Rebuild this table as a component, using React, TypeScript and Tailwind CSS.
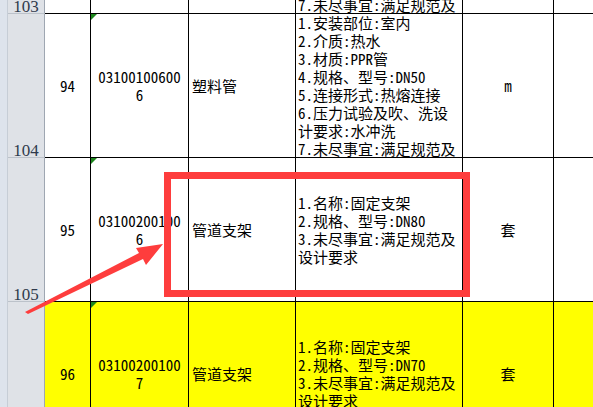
import React from "react";

type Row = {
  num: string;
  seq: string;
  code: [string, string];
  name: string;
  desc: string[];
  unit: string;
  yellow?: boolean;
};

const pipeDesc = [
  "1.安装部位:室内",
  "2.介质:热水",
  "3.材质:PPR管",
  "4.规格、型号:DN50",
  "5.连接形式:热熔连接",
  "6.压力试验及吹、洗设",
  "计要求:水冲洗",
  "7.未尽事宜:满足规范及",
];

const rows: Row[] = [
  { num: "103", seq: "93", code: ["03100100600", "5"], name: "塑料管", desc: pipeDesc, unit: "m" },
  { num: "104", seq: "94", code: ["03100100600", "6"], name: "塑料管", desc: pipeDesc, unit: "m" },
  {
    num: "105",
    seq: "95",
    code: ["03100200100", "6"],
    name: "管道支架",
    desc: ["1.名称:固定支架", "2.规格、型号:DN80", "3.未尽事宜:满足规范及", "设计要求"],
    unit: "套",
  },
  {
    num: "106",
    seq: "96",
    code: ["03100200100", "7"],
    name: "管道支架",
    desc: ["1.名称:固定支架", "2.规格、型号:DN70", "3.未尽事宜:满足规范及", "设计要求"],
    unit: "套",
    yellow: true,
  },
];

const SheetRow = ({ row, first }: { row: Row; first?: boolean }) => (
  <div className={`flex h-[144px] shrink-0 ${first ? "-mt-[130px]" : ""}`}>
    {/* row header */}
    <div className="flex w-[37px] shrink-0 items-end justify-center border-r border-b border-r-[#9fa7b2] border-b-[#bcc2ca] bg-[#dfe2e7] font-['Liberation_Serif',serif] text-[17px] leading-[13px] text-[#2f3a4c]">
      {row.num}
    </div>
    {/* cells */}
    <div
      className={`flex flex-1 border-b border-black text-[15px] leading-[18px] text-black font-['Noto_Sans_Mono_CJK_SC','Noto_Sans_CJK_SC',sans-serif] ${
        row.yellow ? "bg-[#ffff00]" : "bg-white"
      }`}
    >
      <div className="flex w-[46px] shrink-0 items-center justify-center border-r border-black">{row.seq}</div>
      <div className="relative flex w-[98px] shrink-0 flex-col items-center justify-center border-r border-black">
        <span className="absolute top-0 left-0 h-0 w-0 border-t-[6px] border-r-[6px] border-t-[#1d861d] border-r-transparent" />
        <div>{row.code[0]}</div>
        <div>{row.code[1]}</div>
      </div>
      <div className="flex w-[107px] shrink-0 items-center border-r border-black pl-[3px]">{row.name}</div>
      <div className="flex w-[167px] shrink-0 flex-col justify-center overflow-hidden border-r border-black pl-[2px] whitespace-nowrap">
        {row.desc.map((l, i) => (
          <div key={i}>{l}</div>
        ))}
      </div>
      <div className="flex w-[91px] shrink-0 items-center justify-center border-r border-black">{row.unit}</div>
      <div className="flex-1" />
    </div>
  </div>
);

export default function App() {
  return (
    <div className="relative flex h-[407px] w-[593px] overflow-hidden bg-white">
      <div className="w-[8px] shrink-0 border-r border-[#c6cdd6] bg-[#dde3ec]" />
      <div className="flex flex-1 flex-col">
        {rows.map((r, i) => (
          <SheetRow key={r.num} row={r} first={i === 0} />
        ))}
      </div>

      {/* annotation: red box */}
      <div className="pointer-events-none absolute top-[172px] left-[164px] h-[125px] w-[306px] border-[7px] border-[#fe3d3d]" />

      {/* annotation: arrow */}
      <svg className="pointer-events-none absolute inset-0" width="593" height="407" viewBox="0 0 593 407">
        <polygon
          points="25,312 139,253 136,248 163,244 146,265 143,259 28,314"
          fill="#fe3d3d"
        />
      </svg>
    </div>
  );
}
